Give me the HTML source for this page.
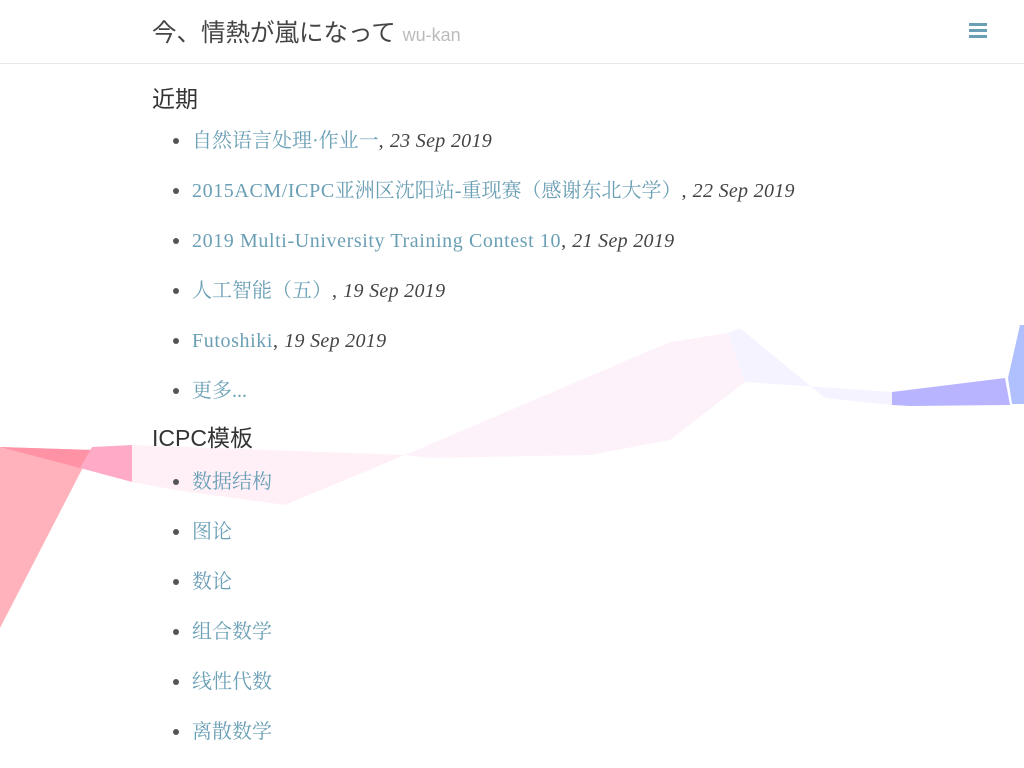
<!DOCTYPE html>
<html><head><meta charset="utf-8"><style>
html,body{margin:0;padding:0;width:1024px;height:768px;overflow:hidden;background:#fff;}
body{position:relative;font-family:"Liberation Serif","Noto Serif CJK SC",serif;}
svg.bg{position:absolute;left:0;top:0;z-index:0}
.hdr{position:absolute;left:0;top:0;width:1024px;height:63px;border-bottom:1px solid #e8e8e8;z-index:1;background:#fff}
.title{position:absolute;left:152px;top:3px;line-height:62px;font-family:"Liberation Sans","Noto Sans CJK JP",sans-serif;font-size:24.5px;color:#444;white-space:nowrap}
.title small{font-size:18px;color:#bbb}
.menu{position:absolute;left:969px;top:23px;width:18px}
.menu i{display:block;height:3px;background:#6a9fb5;margin-bottom:3px}
h2{position:absolute;left:152px;margin:0;line-height:28px;font-family:"Liberation Sans","Noto Sans CJK SC",sans-serif;font-weight:normal;font-size:23px;color:#333;z-index:1;white-space:nowrap}
.li{position:absolute;left:192px;font-size:20px;line-height:26px;height:26px;letter-spacing:0.6px;color:#444;white-space:nowrap;z-index:1}
.li:before{content:"";position:absolute;left:-19px;top:10px;width:6px;height:6px;border-radius:50%;background:#555}
.li a{color:#6a9fb5;text-decoration:none}
.li em{font-style:italic;letter-spacing:0.3px}
.c{letter-spacing:0}
</style></head><body>
<svg class="bg" width="1024" height="768">
<polygon points="405,455 670,342 728,333 745,382 670,440 590,455 430,458" fill="#fdf2fa"/>
<polygon points="728,333 740,328 825,398 892,405 892,392 745,382" fill="#f5f3ff"/>
<polygon points="132,445 405,455 285,505 175,490 132,482" fill="#fff0f8"/>
<polygon points="0,447 92,450 0,628" fill="#ffb2bc"/>
<polygon points="0,447 92,450 80,468" fill="#ff92a4"/>
<polygon points="92,447 132,445 132,482 80,468" fill="#ffaac6"/>
<polygon points="892,392 1005,378 1010,405 910,406 892,405" fill="#b9b4ff"/>
<polygon points="1008,378 1020,325 1024,325 1024,404 1012,404" fill="#b0c0ff"/>
</svg>
<div class="hdr"><div class="title">今、情熱が嵐になって <small>wu-kan</small></div><div class="menu"><i></i><i></i><i></i></div></div>
<h2 style="top:85px">近期</h2>
<div class="li" style="top:128px"><a class="c">自然语言处理·作业一</a>, <em>23 Sep 2019</em></div>
<div class="li" style="top:178px"><a>2015ACM/ICPC<span class="c">亚洲区沈阳站-重现赛（感谢东北大学）</span></a>, <em>22 Sep 2019</em></div>
<div class="li" style="top:228px"><a>2019 Multi-University Training Contest 10</a>, <em>21 Sep 2019</em></div>
<div class="li" style="top:278px"><a class="c">人工智能（五）</a>, <em>19 Sep 2019</em></div>
<div class="li" style="top:328px"><a>Futoshiki</a>, <em>19 Sep 2019</em></div>
<div class="li" style="top:378px"><a class="c">更多...</a></div>
<h2 style="top:424px">ICPC模板</h2>
<div class="li c" style="top:469px"><a>数据结构</a></div>
<div class="li c" style="top:519px"><a>图论</a></div>
<div class="li c" style="top:569px"><a>数论</a></div>
<div class="li c" style="top:619px"><a>组合数学</a></div>
<div class="li c" style="top:669px"><a>线性代数</a></div>
<div class="li c" style="top:719px"><a>离散数学</a></div>
</body></html>
